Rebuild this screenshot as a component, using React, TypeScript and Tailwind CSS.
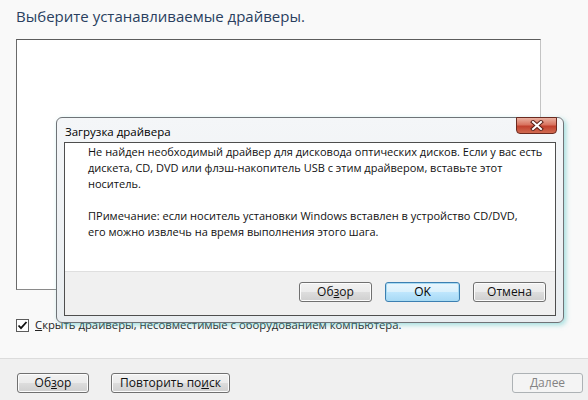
import React from "react";

const font = "font-['Segoe_UI','Open_Sans','Noto_Sans',sans-serif]";

function Btn({
  children,
  className = "",
  variant = "normal",
}: {
  children: React.ReactNode;
  className?: string;
  variant?: "normal" | "default" | "disabled";
}) {
  const base =
    "h-[20px] flex items-center justify-center rounded-[3px] border text-[12px] leading-none";
  const v =
    variant === "default"
      ? "border-[#3c7fb1] bg-[linear-gradient(#eaf6fd_0%,#d9f0fc_50%,#bee6fd_51%,#a7d9f5_100%)] text-black shadow-[inset_0_0_0_1px_#a8dbf3]"
      : variant === "disabled"
      ? "border-[#adb2b5] bg-[#f4f4f4] text-[#838383]"
      : "border-[#707070] bg-[linear-gradient(#f2f2f2_0%,#ebebeb_50%,#dddddd_51%,#cfcfcf_100%)] text-[#111] shadow-[inset_0_0_0_1px_#fcfcfc]";
  return <div className={`${base} ${v} ${className}`}>{children}</div>;
}

export default function App() {
  return (
    <div className={`relative w-[588px] h-[400px] overflow-hidden bg-[#f9f9f9] ${font}`}>
      <div className="flex flex-col h-full">
        <div className="h-[358px] px-[16px] pt-[5px] flex flex-col">
          <div className="text-[15px] leading-[22px] text-[#2a3f5f] whitespace-nowrap">
            Выберите устанавливаемые драйверы.
          </div>
          <div className="mt-[12px] w-[525px] h-[251px] bg-white border border-[#8a8a8a] border-t-[#5c5c5c] border-l-[#6a6a6a] border-r-[#c4c4c4]" />
          <div className="mt-[28px] flex items-center gap-[6px] h-[14px]">
            <div className="w-[13px] h-[13px] border border-[#5c5c5c] bg-white flex items-center justify-center">
              <svg width="11" height="11" viewBox="0 0 11 11">
                <path d="M1.5 5.5 L4 8.2 L9.5 2" fill="none" stroke="#111" strokeWidth="1.8" />
              </svg>
            </div>
            <span className="text-[11.3px] text-[#222] whitespace-nowrap">
              <span className="underline">С</span>крыть драйверы, несовместимые с оборудованием компьютера.
            </span>
          </div>
        </div>
        <div className="flex-1 border-t border-[#dcdcdc] bg-[#f0f0f0] px-[17px] pt-[14px] flex items-start">
          <Btn className="w-[72px]">
            Об<span className="underline">з</span>ор
          </Btn>
          <Btn className="w-[119px] ml-[22px]">
            Повторить по<span className="underline">и</span>ск
          </Btn>
          <Btn variant="disabled" className="w-[71px] ml-auto mr-[-12px]">
            <span className="underline">Д</span>алее
          </Btn>
        </div>
      </div>

      {/* Dialog */}
      <div className="absolute left-[56px] top-[117px] w-[508px] h-[206px] rounded-[6px] border border-[#6f7377] bg-[linear-gradient(#f4f6f8,#e9edf0)] shadow-[2px_2px_5px_rgba(90,200,200,0.55)] flex flex-col px-[7px] pb-[6px]">
        <div className="h-[24px] flex items-center justify-between relative">
          <span className="text-[11.5px] text-black pl-[1px] pt-[3px]">Загрузка драйвера</span>
          <div className="absolute right-[-1px] top-[-1px] w-[41px] h-[17px] rounded-b-[4px] border border-[#6b2a20] bg-[linear-gradient(#eab0a0_0%,#d9735f_45%,#c2412e_55%,#d06a50_100%)] flex items-center justify-center">
            <svg width="14" height="11" viewBox="0 0 14 11">
              <path d="M3 2 L11 9 M11 2 L3 9" stroke="#5a2018" strokeWidth="4" strokeLinecap="square" />
              <path d="M3 2 L11 9 M11 2 L3 9" stroke="#ffffff" strokeWidth="2" strokeLinecap="square" />
            </svg>
          </div>
        </div>
        <div className="flex-1 border border-[#4e4e4e] bg-white flex flex-col">
          <div className="h-[128px] px-[23px] pt-[1px] text-[11px] leading-[16px] text-[#111] whitespace-nowrap">
            <div>Не найден необходимый драйвер для дисковода оптических дисков. Если у вас есть</div>
            <div>дискета, CD, DVD или флэш-накопитель USB с этим драйвером, вставьте этот</div>
            <div>носитель.</div>
            <div className="h-[16px]" />
            <div>ПРимечание: если носитель установки Windows вставлен в устройство CD/DVD,</div>
            <div>его можно извлечь на время выполнения этого шага.</div>
          </div>
          <div className="flex-1 border-t border-[#dfdfdf] bg-[#f0f0f0] flex items-start justify-end pt-[10px] pr-[9px] gap-[13px]">
            <Btn className="w-[73px]">
              Об<span className="underline">з</span>ор
            </Btn>
            <Btn variant="default" className="w-[75px]">
              OK
            </Btn>
            <Btn className="w-[73px]">Отмена</Btn>
          </div>
        </div>
      </div>
    </div>
  );
}
